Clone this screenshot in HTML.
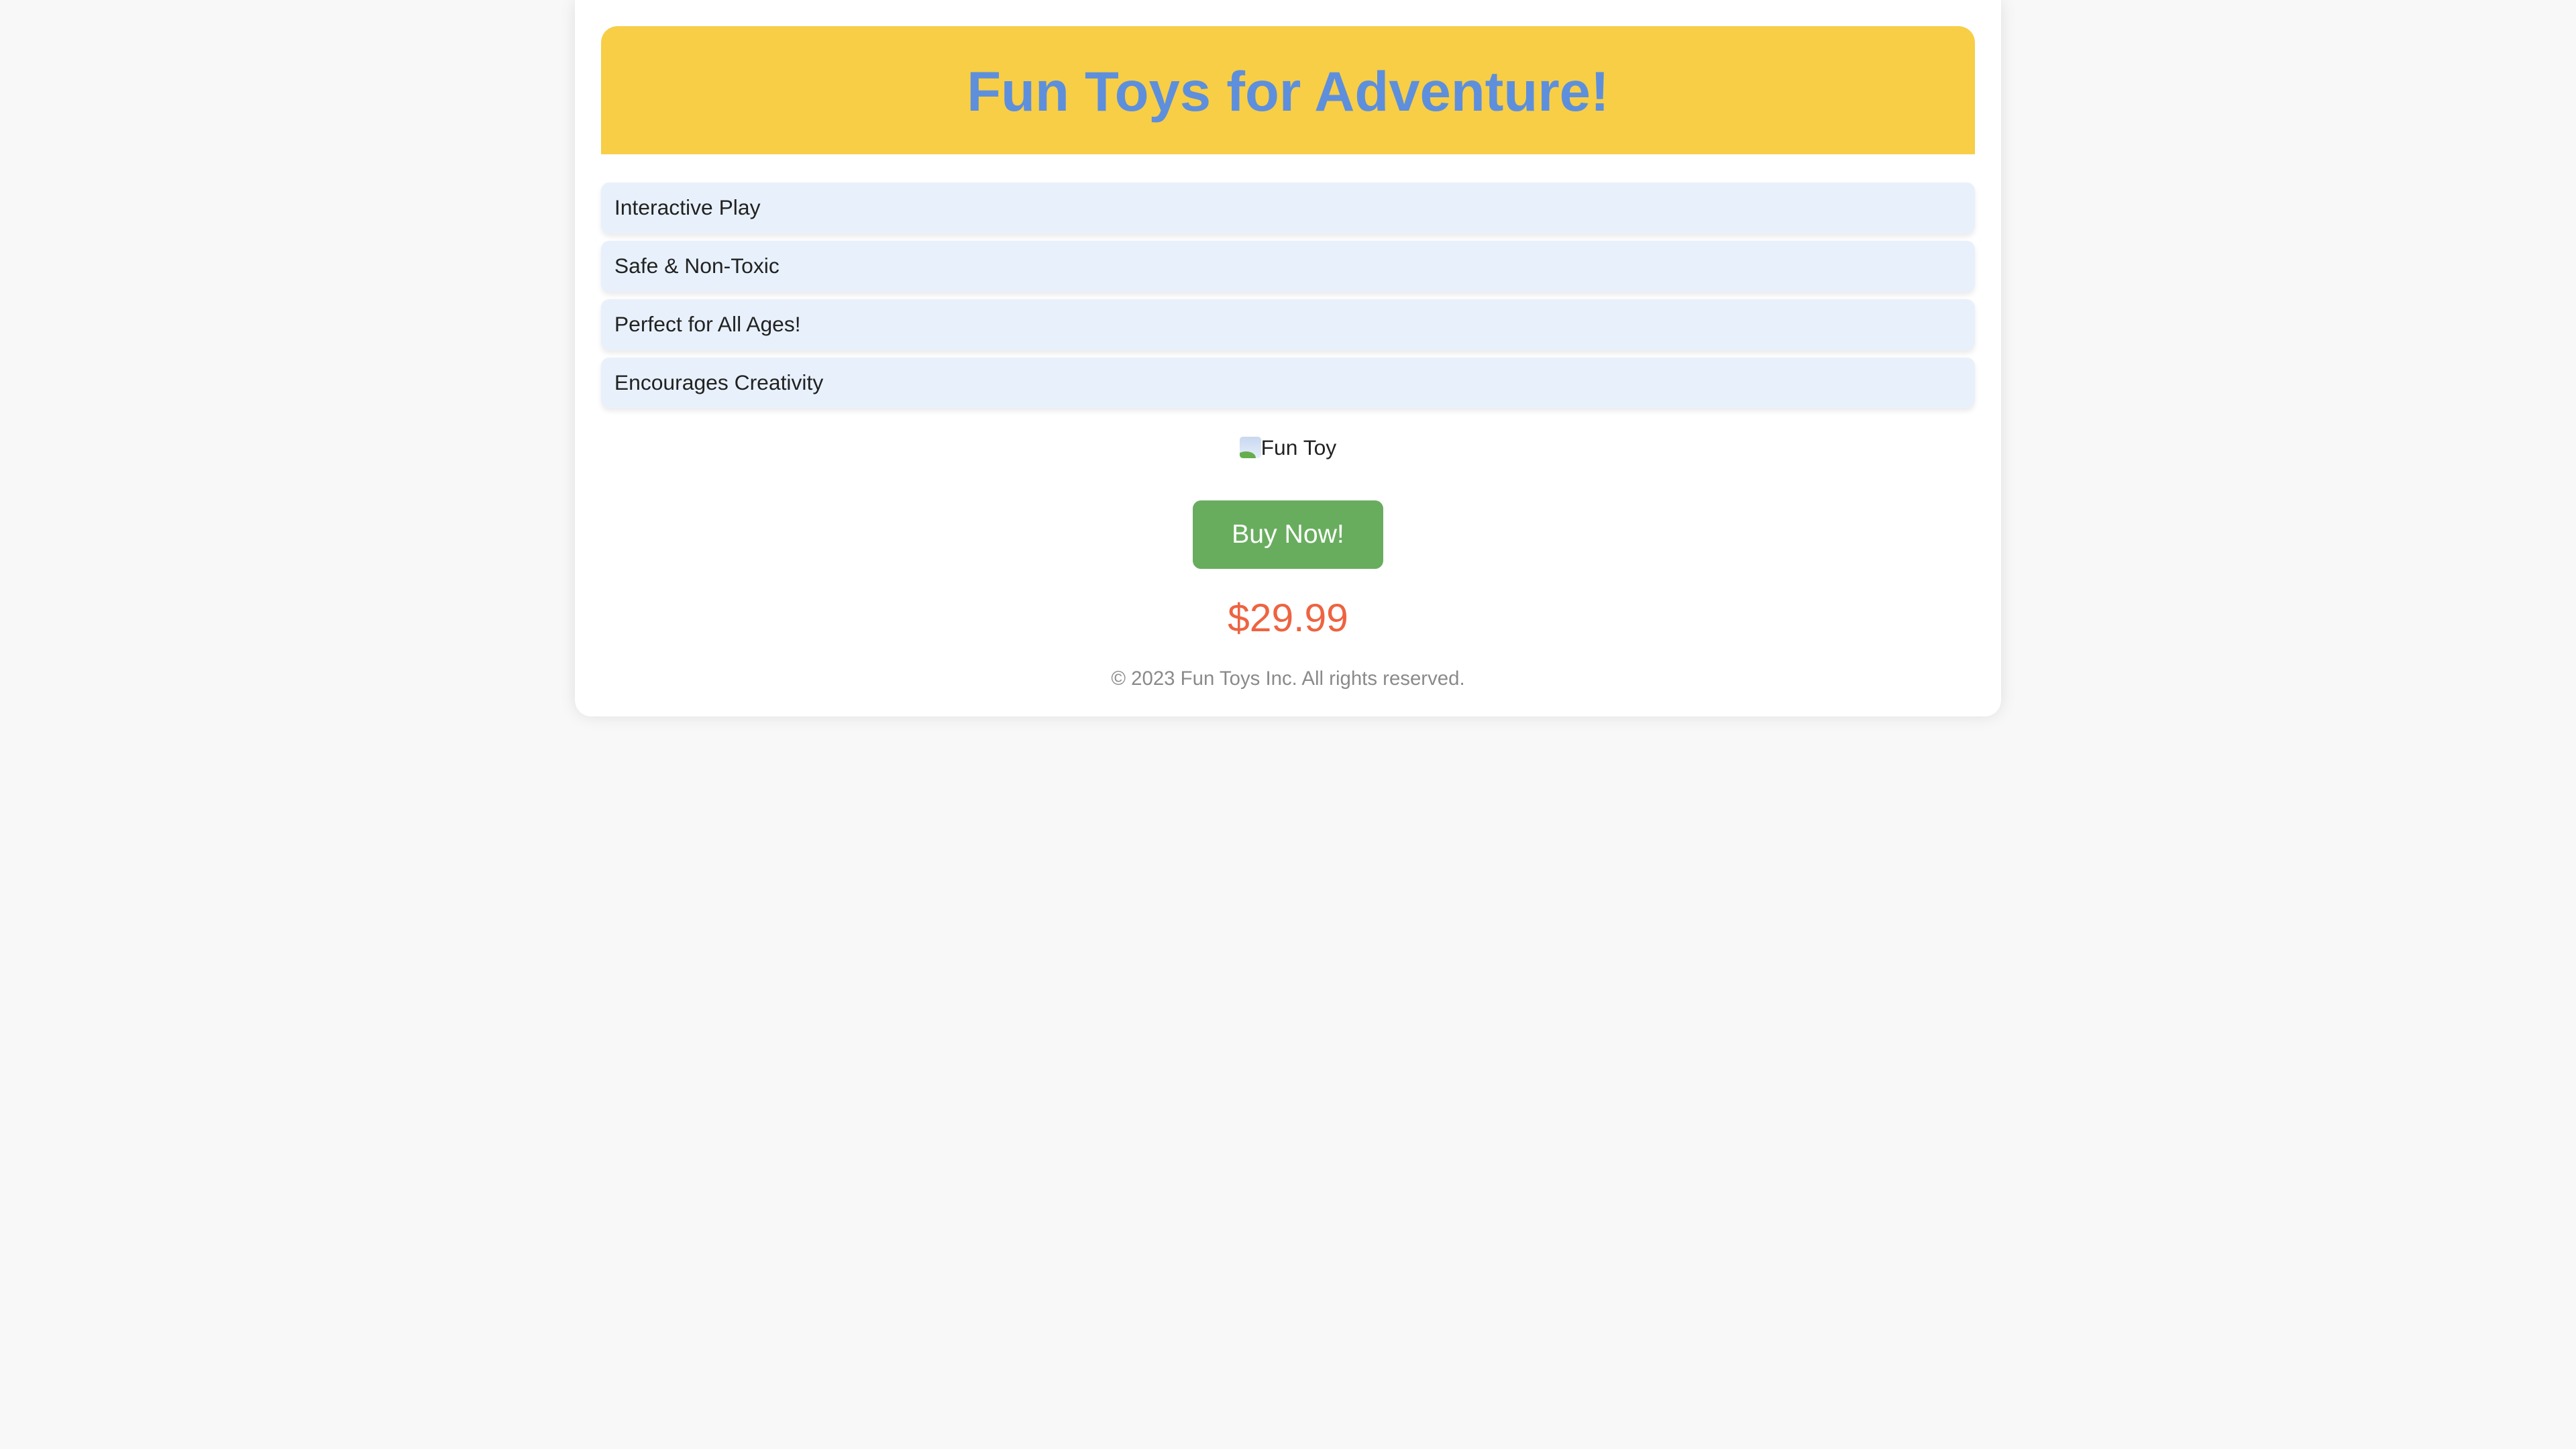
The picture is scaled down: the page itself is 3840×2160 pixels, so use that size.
<!DOCTYPE html>
<html><head><meta charset="utf-8"><style>
html,body{margin:0;padding:0}
body{width:1568px;height:882px;zoom:2.449;background:#f8f8f8;font-family:"Liberation Sans",Arial,sans-serif;overflow:hidden}
.c{position:absolute;left:350px;top:0;width:836px;padding:16px;background:#fff;border-radius:0 0 10px 10px;box-shadow:0 0 10px rgba(0,0,0,.1);height:404px}
.h{height:78px;background:#f7ce46;border-radius:10px 10px 0 0;text-align:center;line-height:80px;color:#5e8fdc;font-weight:bold;font-size:34px;letter-spacing:0px}
.l{margin-top:17px}
.i{height:31px;line-height:31px;background:#e8f1fb;border-radius:5px;margin-bottom:4.5px;padding-left:8px;font-size:13px;color:#222;box-shadow:0 2px 3px rgba(0,0,0,.08)}
.img{text-align:center;font-size:13px;color:#222;margin-top:14px;height:20px;line-height:20px}
.ic{display:inline-block;width:13px;height:13px;vertical-align:-2px;background:linear-gradient(#c8d8f0,#e6eefa);border-radius:2px;position:relative;overflow:hidden}
.ic:after{content:"";position:absolute;left:-2px;bottom:-4px;width:12px;height:8px;background:#67ad4e;border-radius:50%}
.b{display:block;margin:22px auto 0;width:116px;height:42px;background:#68ad5e;border-radius:5px;color:#fff;font-size:16px;text-align:center;line-height:42px}
.p{text-align:center;color:#ee6341;font-size:24px;margin-top:15px;height:30px;line-height:30px}
.f{text-align:center;color:#8a8a8a;font-size:12px;margin-top:15px}
</style></head><body>
<div class="c">
<div class="h">Fun Toys for Adventure!</div>
<div class="l">
<div class="i">Interactive Play</div>
<div class="i">Safe &amp; Non-Toxic</div>
<div class="i">Perfect for All Ages!</div>
<div class="i">Encourages Creativity</div>
</div>
<div class="img"><span class="ic"></span>Fun Toy</div>
<div class="b">Buy Now!</div>
<div class="p">$29.99</div>
<div class="f">© 2023 Fun Toys Inc. All rights reserved.</div>
</div>
</body></html>
